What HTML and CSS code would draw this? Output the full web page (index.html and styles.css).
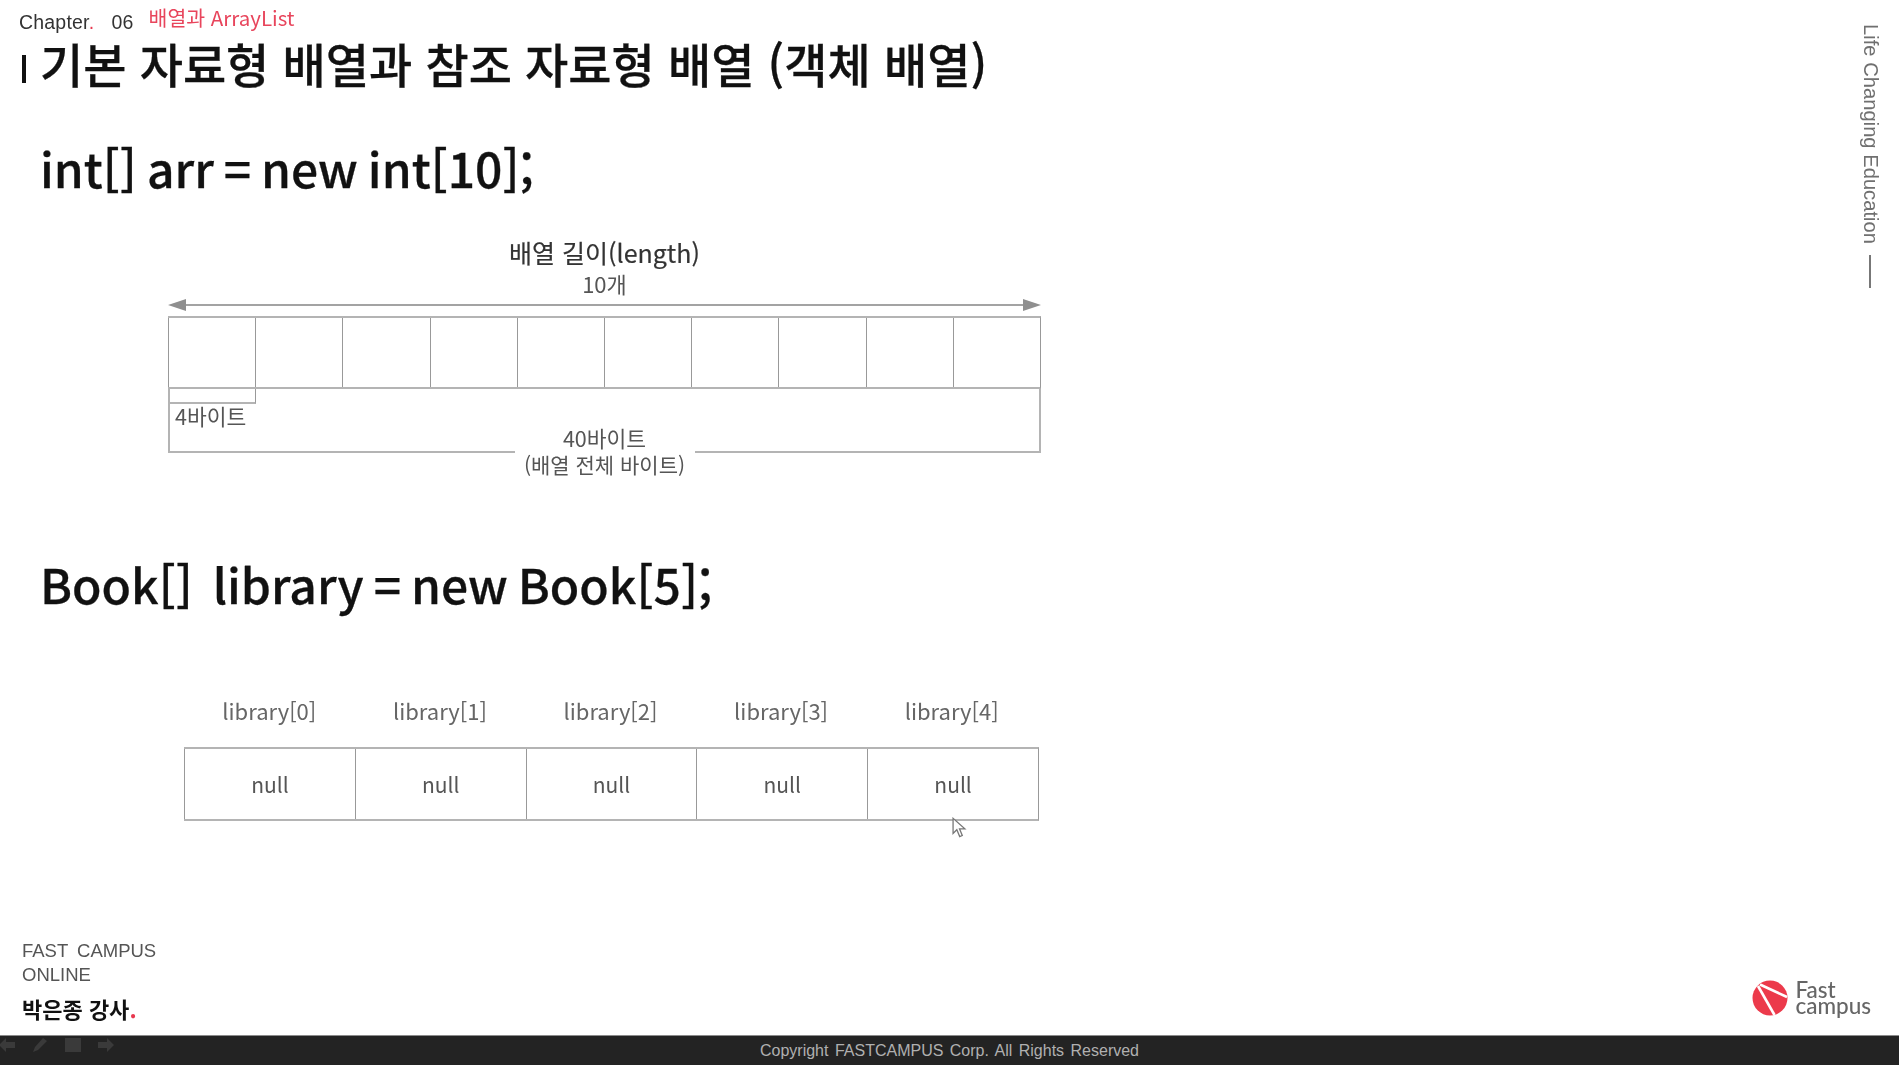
FILE: index.html
```html
<!DOCTYPE html>
<html lang="ko">
<head>
<meta charset="utf-8">
<title>기본 자료형 배열과 참조 자료형 배열</title>
<link rel="stylesheet" href="styles.css">
</head>
<body>
<div class="slide">
  <div class="upper">
    <main class="content">
      <header class="chapter">
        <span class="chapter-no">Chapter<i class="red">.</i> 06</span>
        <span class="chapter-name">배열과 ArrayList</span>
      </header>
      <h1 class="title"><span class="title-bar"></span>기본 자료형 배열과 참조 자료형 배열 (객체 배열)</h1>

      <p class="code code-first">int[] arr = new int[10];</p>

      <section class="array">
        <div class="array-head">배열 길이(length)</div>
        <div class="array-count">10개</div>
        <svg class="array-arrow" viewBox="0 0 873 14" width="873" height="14" aria-hidden="true">
          <path d="M8 7H865" stroke="#a3a3a3" stroke-width="2" fill="none"/>
          <path d="M0 7L18 1V13Z M873 7L855 1V13Z" fill="#8f8f8f"/>
        </svg>
        <div class="cells">
          <div class="cell"></div><div class="cell"></div><div class="cell"></div><div class="cell"></div><div class="cell"></div>
          <div class="cell"></div><div class="cell"></div><div class="cell"></div><div class="cell"></div><div class="cell"></div>
        </div>
        <div class="total">
          <div class="unit"></div>
          <div class="unit-label">4바이트</div>
          <div class="total-label"><span class="total-bytes">40바이트</span><br>(배열 전체 바이트)</div>
        </div>
      </section>

      <p class="code code-second">Book[]&nbsp; library = new Book[5];</p>

      <section class="library">
        <div class="lib-row">
          <div class="lib-name">library[0]</div>
          <div class="lib-name">library[1]</div>
          <div class="lib-name">library[2]</div>
          <div class="lib-name">library[3]</div>
          <div class="lib-name">library[4]</div>
        </div>
        <div class="lib-cells">
          <div class="lib-cell">null</div>
          <div class="lib-cell">null</div>
          <div class="lib-cell">null</div>
          <div class="lib-cell">null</div>
          <div class="lib-cell">null</div>
        </div>
        <svg class="cursor" viewBox="0 0 14 20" width="15" height="22" aria-hidden="true">
          <path d="M1 1V15L4.5 11.6L7.2 18L9.6 17L7 10.8H12Z" fill="#fff" stroke="#777" stroke-width="1.2"/>
        </svg>
      </section>
    </main>
    <aside class="side">
      <span class="side-text">Life Changing Education</span>
      <span class="side-line"></span>
    </aside>
  </div>

  <div class="credits">
    <div class="org">
      <div class="org-name">FAST CAMPUS<br>ONLINE</div>
      <div class="teacher">박은종 강사<span class="red">.</span></div>
    </div>
    <div class="logo">
      <svg viewBox="0 0 36 36" width="36" height="36" aria-hidden="true">
        <circle cx="18" cy="18" r="17.5" fill="#ec3a4b"/>
        <path d="M6 6L22.5 35" stroke="#fff" stroke-width="2.6" fill="none"/>
        <path d="M8 4.5L35 17" stroke="#fff" stroke-width="2.6" fill="none"/>
      </svg>
      <div class="logo-text">Fast<br>campus</div>
    </div>
  </div>

  <footer class="bar">
    <div class="bar-icons">
      <svg viewBox="0 0 16 14" width="16" height="14" aria-hidden="true"><path d="M0 7L7 0V4H16V10H7V14Z" fill="#3a3a3a"/></svg>
      <svg viewBox="0 0 16 16" width="16" height="16" aria-hidden="true"><path d="M1 15L3 10L11 1L15 4L6 13Z" fill="#3a3a3a"/></svg>
      <svg viewBox="0 0 16 14" width="16" height="14" aria-hidden="true"><rect width="16" height="14" fill="#3a3a3a"/></svg>
      <svg viewBox="0 0 16 14" width="16" height="14" aria-hidden="true"><path d="M16 7L9 0V4H0V10H9V14Z" fill="#3a3a3a"/></svg>
    </div>
    <div class="copyright">Copyright FASTCAMPUS Corp. All Rights Reserved</div>
  </footer>
</div>
</body>
</html>
```

FILE: styles.css
```css
* { box-sizing: border-box; }

html, body {
  margin: 0;
  padding: 0;
  background: #fff;
}

.slide {
  position: relative;
  width: 1899px;
  height: 1065px;
  display: flex;
  flex-direction: column;
  overflow: hidden;
  font-family: "Noto Sans CJK KR", "Noto Sans", sans-serif;
  color: #111;
  filter: blur(0.45px);
}

.upper {
  flex: 1;
  display: flex;
  min-height: 0;
}

.content {
  flex: 1;
  min-width: 0;
}

.red { color: #e8384f; font-style: normal; }

.chapter {
  height: 34px;
  padding: 10px 0 0 19px;
  display: flex;
  align-items: flex-start;
  gap: 15px;
}

.chapter-no {
  font: 19.5px/24px "Liberation Sans", sans-serif;
  color: #333;
  word-spacing: 11.5px;
  letter-spacing: 0.2px;
}

.chapter-name {
  margin-top: -5px;
  font: 400 20.5px/24px "Noto Sans CJK KR", sans-serif;
  color: #e8455c;
}

.title {
  margin: 1px 0 0;
  padding-left: 22px;
  display: flex;
  align-items: center;
  height: 56px;
  font-size: 47px;
  line-height: 56px;
  font-weight: 500;
  color: #111;
  white-space: pre;
  -webkit-text-stroke: 0.3px #111;
}

.title-bar {
  width: 4px;
  height: 28px;
  margin: 12px 14px 0 0;
  background: #111;
  flex: none;
}

.code {
  margin: 0;
  padding-left: 40px;
  height: 70px;
  font-size: 48px;
  line-height: 70px;
  font-weight: 500;
  color: #111;
  white-space: pre;
  word-spacing: -3.5px;
  -webkit-text-stroke: 0.3px #111;
}

.code-first { margin-top: 41px; }
.code-second { margin-top: 95px; }

.array {
  margin: 35px 0 0 168px;
  width: 873px;
}

.array-head {
  text-align: center;
  font-size: 25px;
  line-height: 30px;
  color: #333;
  -webkit-text-stroke: 0.2px #333;
}

.array-count {
  margin-top: 3px;
  text-align: center;
  font-size: 22px;
  line-height: 26px;
  color: #555;
}

.array-arrow {
  display: block;
  margin-top: 2px;
}

.cells {
  margin-top: 4px;
  display: grid;
  grid-template-columns: repeat(10, 1fr);
  height: 73px;
  border-top: 2px solid #b4b4b4;
  border-bottom: 2px solid #b4b4b4;
  border-right: 1px solid #999;
}

.cell { border-left: 1px solid #999; }

.total {
  position: relative;
  height: 64px;
  border: 2px solid #b4b4b4;
  border-top: 0;
}

.unit {
  width: 86px;
  height: 15px;
  border-right: 1px solid #999;
  border-bottom: 2px solid #b4b4b4;
}

.unit-label {
  margin: -2px 0 0 5px;
  font-size: 21.5px;
  line-height: 28px;
  color: #555;
}

.total-label {
  position: absolute;
  left: 50%;
  top: 36px;
  transform: translateX(-50%);
  width: 180px;
  text-align: center;
  font-size: 21px;
  line-height: 26px;
  color: #555;
  background: linear-gradient(#fff0 0, #fff0 25px, #fff 25px);
}

.total-bytes { font-size: 21.5px; }

.library {
  position: relative;
  margin: 77px 0 0 184px;
  width: 855px;
}

.lib-row {
  display: grid;
  grid-template-columns: repeat(5, 1fr);
  height: 30px;
  padding-right: 2px;
}

.lib-name {
  text-align: center;
  font-size: 22px;
  line-height: 30px;
  color: #666;
}

.lib-cells {
  margin-top: 22px;
  display: grid;
  grid-template-columns: repeat(5, 1fr);
  height: 74px;
  border-top: 2px solid #b4b4b4;
  border-bottom: 2px solid #b4b4b4;
  border-right: 1px solid #999;
}

.lib-cell {
  border-left: 1px solid #999;
  text-align: center;
  font-size: 21px;
  line-height: 70px;
  color: #555;
}

.cursor {
  position: absolute;
  left: 768px;
  top: 122px;
}

.side {
  width: 58px;
  padding-top: 24px;
  display: flex;
  flex-direction: column;
  align-items: center;
  gap: 11px;
}

.side-text {
  writing-mode: vertical-rl;
  margin-left: 2px;
  font: 20.2px/22px "Liberation Sans", sans-serif;
  color: #707070;
}

.side-line {
  width: 2px;
  height: 33px;
  background: #777;
}

.credits {
  height: 0;
  display: flex;
  justify-content: space-between;
  align-items: flex-end;
  padding: 0 28px 0 22px;
}

.org { padding-bottom: 12px; }

.org-name {
  font: 300 18.5px/24px "Liberation Sans", sans-serif;
  color: #555;
  word-spacing: 4px;
}

.teacher {
  margin-top: 6px;
  font-size: 22px;
  line-height: 30px;
  font-weight: 700;
  color: #111;
}

.logo {
  display: flex;
  align-items: center;
  gap: 7px;
  padding-bottom: 19px;
}

.logo svg { display: block; }

.logo-text {
  font: 500 22.5px/16px Lato, sans-serif;
  color: #666;
}

.bar {
  position: relative;
  flex: none;
  height: 30px;
  background: #232323;
  border-top: 1px solid #8a8a8a;
  display: flex;
  align-items: center;
  justify-content: center;
}

.bar-icons {
  position: absolute;
  left: -1px;
  top: 1px;
  display: flex;
  align-items: center;
  gap: 17px;
}

.copyright {
  font: 16px/28px "Liberation Sans", sans-serif;
  color: #b0b0b0;
  word-spacing: 2px;
}
```
